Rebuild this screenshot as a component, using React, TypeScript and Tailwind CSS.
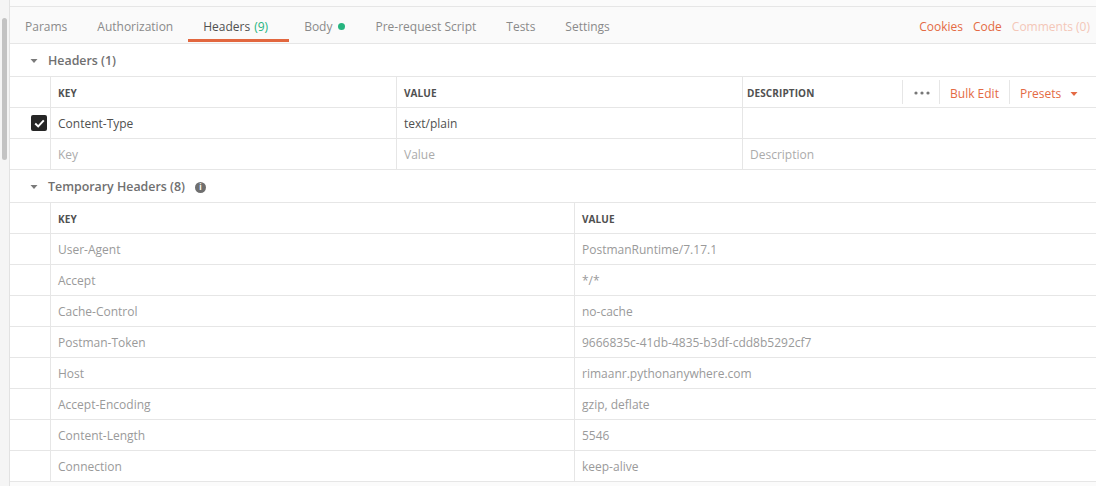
import React from "react";

const font = { fontFamily: '"Open Sans", "Noto Sans", sans-serif' };

function Caret() {
  return (
    <svg width="8" height="6" viewBox="0 0 8 6" className="mr-[10px]">
      <path d="M0.5 1 L7.5 1 L4 5 Z" fill="#7a7a7a" />
    </svg>
  );
}

function SectionTitle({ children, info }: { children: React.ReactNode; info?: boolean }) {
  return (
    <div className="flex h-[32px] items-center pl-[20px] pt-[2px]">
      <Caret />
      <span className="text-[12.4px] font-semibold text-[#707070]">{children}</span>
      {info && (
        <span className="ml-[10px] flex h-[11px] w-[11px] items-center justify-center rounded-full bg-[#6f6f6f] text-[8px] font-bold leading-none text-white">
          i
        </span>
      )}
    </div>
  );
}

const th = "text-[10px] font-bold uppercase text-[#505050] tracking-[0.1px] pt-[2px]";
const cell = "flex items-center border-l border-[#e6e6e6] px-[7px] pt-[1px]";

export default function App() {
  const temp: [string, string][] = [
    ["User-Agent", "PostmanRuntime/7.17.1"],
    ["Accept", "*/*"],
    ["Cache-Control", "no-cache"],
    ["Postman-Token", "9666835c-41db-4835-b3df-cdd8b5292cf7"],
    ["Host", "rimaanr.pythonanywhere.com"],
    ["Accept-Encoding", "gzip, deflate"],
    ["Content-Length", "5546"],
    ["Connection", "keep-alive"],
  ];
  const tabs = ["Params", "Authorization", "Headers", "Body", "Pre-request Script", "Tests", "Settings"];

  return (
    <div className="flex h-[486px] w-[1096px] overflow-hidden bg-white" style={font}>
      {/* left scrollbar strip */}
      <div className="relative h-full w-[10px] shrink-0 border-r border-[#e2e2e2] bg-[#f5f5f5]">
        <div className="absolute left-[2px] top-[18px] h-[142px] w-[5px] rounded-[3px] bg-[#c3c3c3]" />
      </div>
      <div className="flex min-w-0 flex-1 flex-col">
        <div className="h-[7px] shrink-0 border-b border-[#e6e6e6] bg-[#fbfbfb]" />
        {/* tabs */}
        <div className="flex h-[37px] shrink-0 items-stretch border-b border-[#e6e6e6] bg-[#fafafa]">
          {tabs.map((t) => {
            const active = t === "Headers";
            return (
              <div
                key={t}
                className={`relative flex items-center pl-[15px] pt-[3px] text-[12px] ${active ? "pr-[21px] text-[#505050]" : "pr-[15px] text-[#8a8a8a]"}`}
              >
                {t}
                {t === "Headers" && <span className="ml-[4px] text-[#26b47f]">(9)</span>}
                {t === "Body" && <span className="ml-[6px] inline-block h-[7px] w-[7px] rounded-full bg-[#26b47f]" />}
                {active && (
                  <div className="absolute bottom-[1px] left-0 right-0 h-[3px] bg-[#e2673f]" />
                )}
              </div>
            );
          })}
          <div className="ml-auto flex items-center gap-[10px] pr-[6px] pt-[3px] text-[12px]">
            <span className="text-[#e46a44]">Cookies</span>
            <span className="text-[#e46a44]">Code</span>
            <span className="text-[#f4c7b8]">Comments (0)</span>
          </div>
        </div>

        <SectionTitle>Headers (1)</SectionTitle>
        <div className="border-t border-[#e6e6e6] text-[12px]">
          <div className="flex h-[31px] border-b border-[#e6e6e6]">
            <div className="w-[40px] shrink-0" />
            <div className={`flex w-[346px] shrink-0 items-center border-l border-[#e6e6e6] px-[7px] ${th}`}>Key</div>
            <div className={`flex w-[346px] shrink-0 items-center border-l border-[#e6e6e6] px-[7px] ${th}`}>Value</div>
            <div className={`flex w-[160px] shrink-0 items-center border-l border-[#e6e6e6] px-[4px] ${th}`}>Description</div>
            <div className="my-[3px] flex w-[37px] shrink-0 items-center justify-center border-l border-[#e6e6e6] pt-[2px] pl-[2px]">
              <svg width="16" height="4" viewBox="0 0 16 4">
                <circle cx="2" cy="2" r="1.6" fill="#777" />
                <circle cx="8" cy="2" r="1.6" fill="#777" />
                <circle cx="14" cy="2" r="1.6" fill="#777" />
              </svg>
            </div>
            <div className="my-[3px] flex w-[70px] shrink-0 items-center justify-center border-l border-[#e6e6e6] pt-[4px] text-[12px] text-[#e46a44]">
              Bulk Edit
            </div>
            <div className="my-[3px] flex flex-1 items-center border-l border-[#e6e6e6] pl-[10px] pt-[4px] text-[12px] text-[#e46a44]">
              Presets
              <svg width="8" height="6" viewBox="0 0 8 6" className="ml-[9px]">
                <path d="M0.5 1 L7.5 1 L4 5 Z" fill="#e46a44" />
              </svg>
            </div>
          </div>
          <div className="flex h-[31px] border-b border-[#e6e6e6]">
            <div className="flex w-[40px] shrink-0 items-center pl-[21px]">
              <span className="flex h-[16px] w-[16px] items-center justify-center rounded-[2px] bg-[#262626]">
                <svg width="11" height="9" viewBox="0 0 11 9">
                  <path d="M1.2 4.6 L4.2 7.4 L9.8 1.4" stroke="white" strokeWidth="2" fill="none" />
                </svg>
              </span>
            </div>
            <div className={`w-[346px] shrink-0 text-[#505050] ${cell}`}>Content-Type</div>
            <div className={`w-[346px] shrink-0 text-[#505050] ${cell}`}>text/plain</div>
            <div className={`flex-1 ${cell}`} />
          </div>
          <div className="flex h-[31px] border-b border-[#e6e6e6]">
            <div className="w-[40px] shrink-0" />
            <div className={`w-[346px] shrink-0 text-[#ababab] ${cell}`}>Key</div>
            <div className={`w-[346px] shrink-0 text-[#ababab] ${cell}`}>Value</div>
            <div className={`flex-1 text-[#ababab] ${cell}`}>Description</div>
          </div>
        </div>

        <SectionTitle info>Temporary Headers (8)</SectionTitle>
        <div className="border-t border-[#e6e6e6] text-[12px]">
          <div className="flex h-[31px] border-b border-[#e6e6e6]">
            <div className="w-[40px] shrink-0" />
            <div className={`flex w-[524px] shrink-0 items-center border-l border-[#e6e6e6] px-[7px] ${th}`}>Key</div>
            <div className={`flex flex-1 items-center border-l border-[#e6e6e6] px-[7px] ${th}`}>Value</div>
          </div>
          {temp.map(([k, v]) => (
            <div key={k} className="flex h-[31px] border-b border-[#e6e6e6]">
              <div className="w-[40px] shrink-0" />
              <div className={`w-[524px] shrink-0 text-[#9a9a9a] ${cell}`}>{k}</div>
              <div className={`flex-1 text-[#9a9a9a] ${cell}`}>{v}</div>
            </div>
          ))}
        </div>
        <div className="flex-1 bg-[#fbfbfb]" />
      </div>
    </div>
  );
}
